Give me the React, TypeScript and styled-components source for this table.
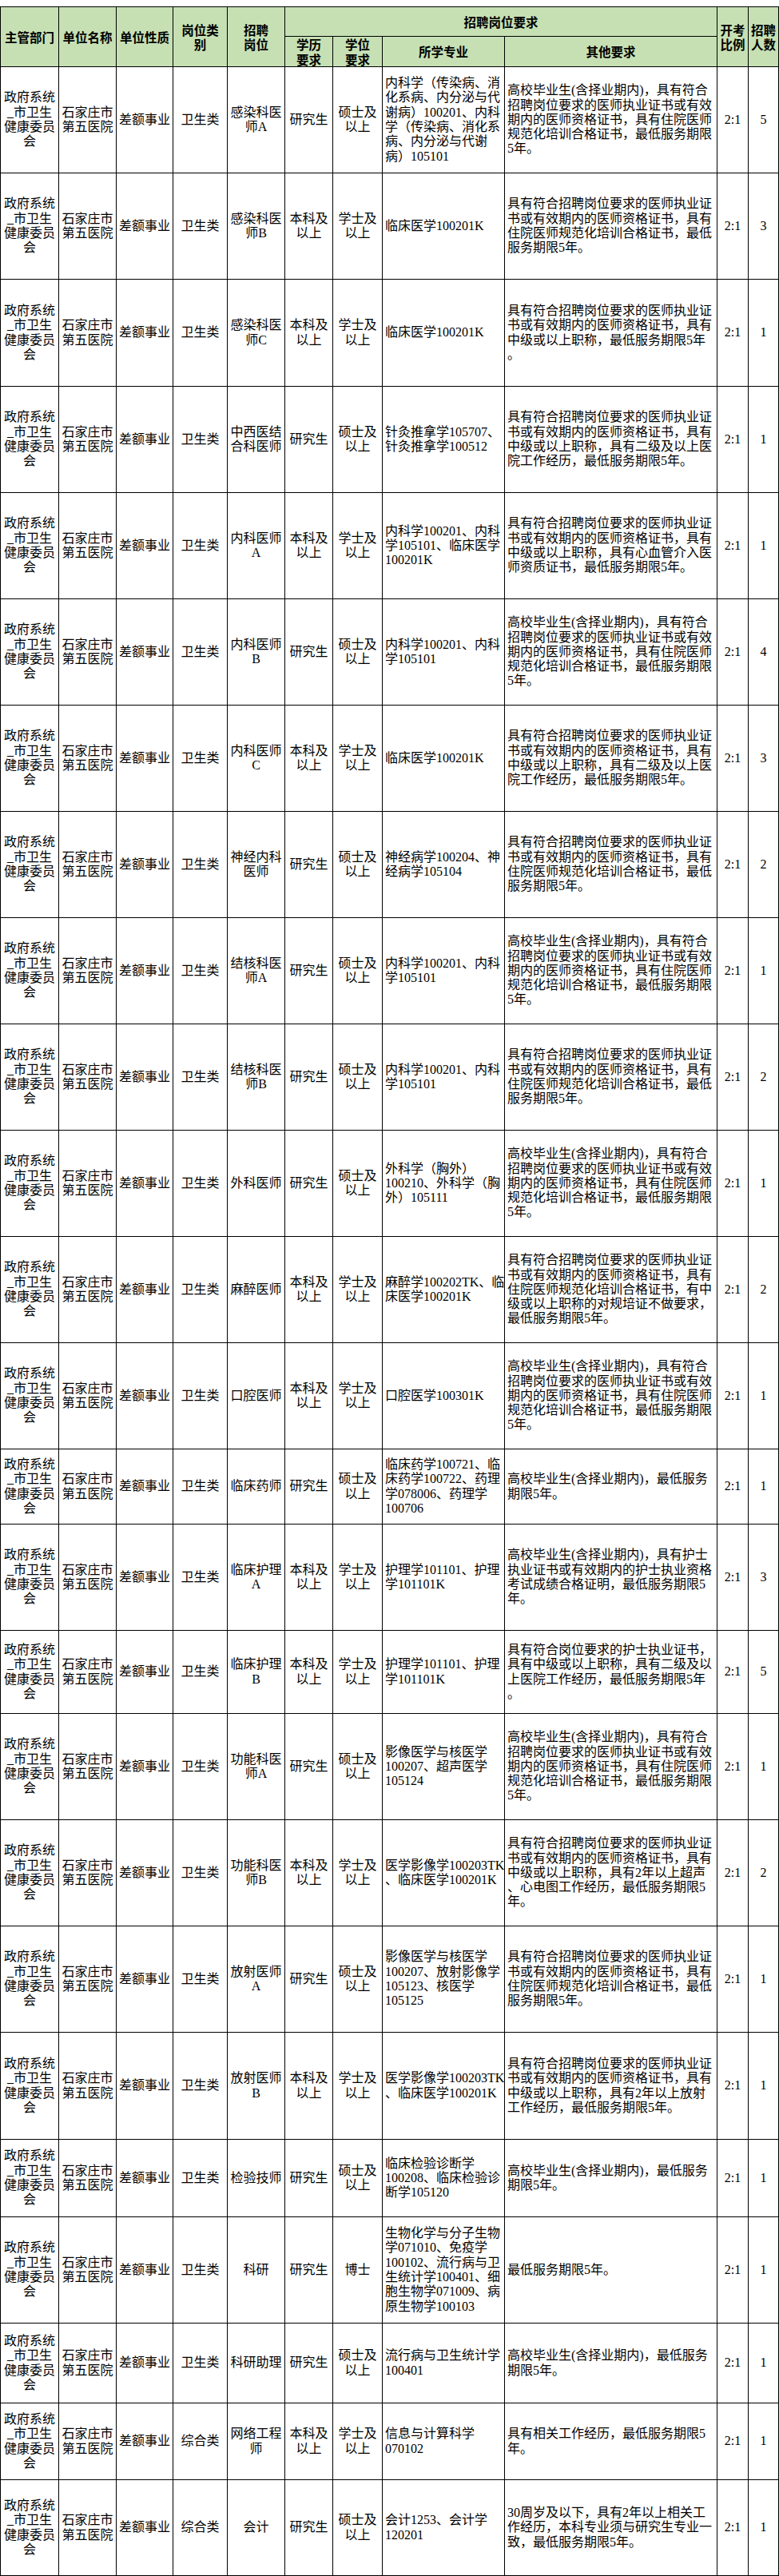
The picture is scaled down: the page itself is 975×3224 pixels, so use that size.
import React from "react";
import styled, { createGlobalStyle } from "styled-components";

interface Post {
  post: string;
  edu: string;
  degree: string;
  major: string;
  other: string;
  count: string;
  h: number;
  kind?: string;
}

const MASTER = "硕士及\n以上";
const BACHELOR = "学士及\n以上";
const GRAD = "研究生";
const UNDER = "本科及\n以上";

const OTHER_GRAD =
  "高校毕业生(含择业期内)，具有符合\n招聘岗位要求的医师执业证书或有效\n期内的医师资格证书，具有住院医师\n规范化培训合格证书，最低服务期限\n5年。";
const OTHER_REGULAR =
  "具有符合招聘岗位要求的医师执业证\n书或有效期内的医师资格证书，具有\n住院医师规范化培训合格证书，最低\n服务期限5年。";
const OTHER_SENIOR =
  "具有符合招聘岗位要求的医师执业证\n书或有效期内的医师资格证书，具有\n中级或以上职称，具有二级及以上医\n院工作经历，最低服务期限5年。";
const OTHER_SHORT = "高校毕业生(含择业期内)，最低服务\n期限5年。";

const posts: Post[] = [
  {
    post: "感染科医\n师A",
    edu: GRAD,
    degree: MASTER,
    major:
      "内科学（传染病、消\n化系病、内分泌与代\n谢病）100201、内科\n学（传染病、消化系\n病、内分泌与代谢\n病）105101",
    other: OTHER_GRAD,
    count: "5",
    h: 133,
  },
  { post: "感染科医\n师B", edu: UNDER, degree: BACHELOR, major: "临床医学100201K", other: OTHER_REGULAR, count: "3", h: 133 },
  {
    post: "感染科医\n师C",
    edu: UNDER,
    degree: BACHELOR,
    major: "临床医学100201K",
    other: "具有符合招聘岗位要求的医师执业证\n书或有效期内的医师资格证书，具有\n中级或以上职称，最低服务期限5年\n。",
    count: "1",
    h: 134,
  },
  {
    post: "中西医结\n合科医师",
    edu: GRAD,
    degree: MASTER,
    major: "针灸推拿学105707、\n针灸推拿学100512",
    other: OTHER_SENIOR,
    count: "1",
    h: 133,
  },
  {
    post: "内科医师\nA",
    edu: UNDER,
    degree: BACHELOR,
    major: "内科学100201、内科\n学105101、临床医学\n100201K",
    other: "具有符合招聘岗位要求的医师执业证\n书或有效期内的医师资格证书，具有\n中级或以上职称，具有心血管介入医\n师资质证书，最低服务期限5年。",
    count: "1",
    h: 133,
  },
  { post: "内科医师\nB", edu: GRAD, degree: MASTER, major: "内科学100201、内科\n学105101", other: OTHER_GRAD, count: "4", h: 133 },
  { post: "内科医师\nC", edu: UNDER, degree: BACHELOR, major: "临床医学100201K", other: OTHER_SENIOR, count: "3", h: 133 },
  { post: "神经内科\n医师", edu: GRAD, degree: MASTER, major: "神经病学100204、神\n经病学105104", other: OTHER_REGULAR, count: "2", h: 133 },
  { post: "结核科医\n师A", edu: GRAD, degree: MASTER, major: "内科学100201、内科\n学105101", other: OTHER_GRAD, count: "1", h: 133 },
  { post: "结核科医\n师B", edu: GRAD, degree: MASTER, major: "内科学100201、内科\n学105101", other: OTHER_REGULAR, count: "2", h: 133 },
  {
    post: "外科医师",
    edu: GRAD,
    degree: MASTER,
    major: "外科学（胸外）\n100210、外科学（胸\n外）105111",
    other: OTHER_GRAD,
    count: "1",
    h: 133,
  },
  {
    post: "麻醉医师",
    edu: UNDER,
    degree: BACHELOR,
    major: "麻醉学100202TK、临\n床医学100201K",
    other:
      "具有符合招聘岗位要求的医师执业证\n书或有效期内的医师资格证书，具有\n住院医师规范化培训合格证书，有中\n级或以上职称的对规培证不做要求，\n最低服务期限5年。",
    count: "2",
    h: 133,
  },
  { post: "口腔医师", edu: UNDER, degree: BACHELOR, major: "口腔医学100301K", other: OTHER_GRAD, count: "1", h: 133 },
  {
    post: "临床药师",
    edu: GRAD,
    degree: MASTER,
    major: "临床药学100721、临\n床药学100722、药理\n学078006、药理学\n100706",
    other: OTHER_SHORT,
    count: "1",
    h: 94,
  },
  {
    post: "临床护理\nA",
    edu: UNDER,
    degree: BACHELOR,
    major: "护理学101101、护理\n学101101K",
    other: "高校毕业生(含择业期内)，具有护士\n执业证书或有效期内的护士执业资格\n考试成绩合格证明，最低服务期限5\n年。",
    count: "3",
    h: 133,
  },
  {
    post: "临床护理\nB",
    edu: UNDER,
    degree: BACHELOR,
    major: "护理学101101、护理\n学101101K",
    other: "具有符合岗位要求的护士执业证书，\n具有中级或以上职称，具有二级及以\n上医院工作经历，最低服务期限5年\n。",
    count: "5",
    h: 104,
  },
  {
    post: "功能科医\n师A",
    edu: GRAD,
    degree: MASTER,
    major: "影像医学与核医学\n100207、超声医学\n105124",
    other: OTHER_GRAD,
    count: "1",
    h: 133,
  },
  {
    post: "功能科医\n师B",
    edu: UNDER,
    degree: BACHELOR,
    major: "医学影像学100203TK\n、临床医学100201K",
    other:
      "具有符合招聘岗位要求的医师执业证\n书或有效期内的医师资格证书，具有\n中级或以上职称，具有2年以上超声\n、心电图工作经历，最低服务期限5\n年。",
    count: "2",
    h: 133,
  },
  {
    post: "放射医师\nA",
    edu: GRAD,
    degree: MASTER,
    major: "影像医学与核医学\n100207、放射影像学\n105123、核医学\n105125",
    other: OTHER_REGULAR,
    count: "1",
    h: 133,
  },
  {
    post: "放射医师\nB",
    edu: UNDER,
    degree: BACHELOR,
    major: "医学影像学100203TK\n、临床医学100201K",
    other: "具有符合招聘岗位要求的医师执业证\n书或有效期内的医师资格证书，具有\n中级或以上职称，具有2年以上放射\n工作经历，最低服务期限5年。",
    count: "1",
    h: 134,
  },
  {
    post: "检验技师",
    edu: GRAD,
    degree: MASTER,
    major: "临床检验诊断学\n100208、临床检验诊\n断学105120",
    other: OTHER_SHORT,
    count: "1",
    h: 97,
  },
  {
    post: "科研",
    edu: GRAD,
    degree: "博士",
    major:
      "生物化学与分子生物\n学071010、免疫学\n100102、流行病与卫\n生统计学100401、细\n胞生物学071009、病\n原生物学100103",
    other: "最低服务期限5年。",
    count: "1",
    h: 133,
  },
  { post: "科研助理", edu: GRAD, degree: MASTER, major: "流行病与卫生统计学\n100401", other: OTHER_SHORT, count: "1", h: 100 },
  {
    post: "网络工程\n师",
    edu: UNDER,
    degree: BACHELOR,
    major: "信息与计算科学\n070102",
    other: "具有相关工作经历，最低服务期限5\n年。",
    count: "1",
    h: 96,
    kind: "综合类",
  },
  {
    post: "会计",
    edu: GRAD,
    degree: MASTER,
    major: "会计1253、会计学\n120201",
    other: "30周岁及以下，具有2年以上相关工\n作经历，本科专业须与研究生专业一\n致，最低服务期限5年。",
    count: "1",
    h: 120,
    kind: "综合类",
  },
];

// column widths read off the sheet
const colWidths = [73, 72, 71, 68, 72, 60, 62, 153, 266, 39, 38];

const App: React.FC = () => {
  return (
    <>
      <GlobalStyle />
      <Sheet>
        <colgroup>
          {colWidths.map((w, i) => (
            <col key={i} style={{ width: w }} />
          ))}
        </colgroup>
        <thead>
          <Row $h={37}>
            <Head rowSpan={2}>主管部门</Head>
            <Head rowSpan={2}>单位名称</Head>
            <Head rowSpan={2}>单位性质</Head>
            <Head rowSpan={2}>{"岗位类\n别"}</Head>
            <Head rowSpan={2}>{"招聘\n岗位"}</Head>
            <Head colSpan={4}>招聘岗位要求</Head>
            <Head rowSpan={2}>{"开考\n比例"}</Head>
            <Head rowSpan={2}>{"招聘\n人数"}</Head>
          </Row>
          <Row $h={38}>
            <Head>{"学历\n要求"}</Head>
            <Head>{"学位\n要求"}</Head>
            <Head>所学专业</Head>
            <Head>其他要求</Head>
          </Row>
        </thead>
        <tbody>
          {posts.map((p, i) => (
            <Row key={i} $h={p.h}>
              <Cell>{"政府系统\n_市卫生\n健康委员\n会"}</Cell>
              <Cell>{"石家庄市\n第五医院"}</Cell>
              <Cell>差额事业</Cell>
              <Cell>{p.kind || "卫生类"}</Cell>
              <Cell>{p.post}</Cell>
              <Cell>{p.edu}</Cell>
              <Cell>{p.degree}</Cell>
              <Cell $left>{p.major}</Cell>
              <Cell $left>{p.other}</Cell>
              <Cell>2:1</Cell>
              <Cell>{p.count}</Cell>
            </Row>
          ))}
        </tbody>
      </Sheet>
    </>
  );
};

export default App;

const GlobalStyle = createGlobalStyle`
  body {
    margin: 8px 0 0 0;
    background: #ffffff;
  }
`;

const Sheet = styled.table`
  width: 974px;
  border-collapse: collapse;
  table-layout: fixed;
  font-family: "Liberation Serif", "Noto Sans CJK SC", serif;
  font-size: 16px;
  line-height: 18.3px;
  color: #000;
`;

const Row = styled.tr<{ $h: number }>`
  height: ${(p) => p.$h}px;
`;

const Head = styled.th`
  background: #c6e0b4;
  border: 1px solid #000;
  padding: 0;
  font-family: "Noto Sans CJK SC", sans-serif;
  font-weight: 700;
  font-size: 15.5px;
  line-height: 18.3px;
  text-align: center;
  vertical-align: middle;
  white-space: pre;
`;

const Cell = styled.td<{ $left?: boolean }>`
  border: 1px solid #000;
  padding: ${(p) => (p.$left ? "0 1px 0 3px" : "0 1px")};
  text-align: ${(p) => (p.$left ? "left" : "center")};
  vertical-align: middle;
  white-space: pre;
  overflow: hidden;
`;
